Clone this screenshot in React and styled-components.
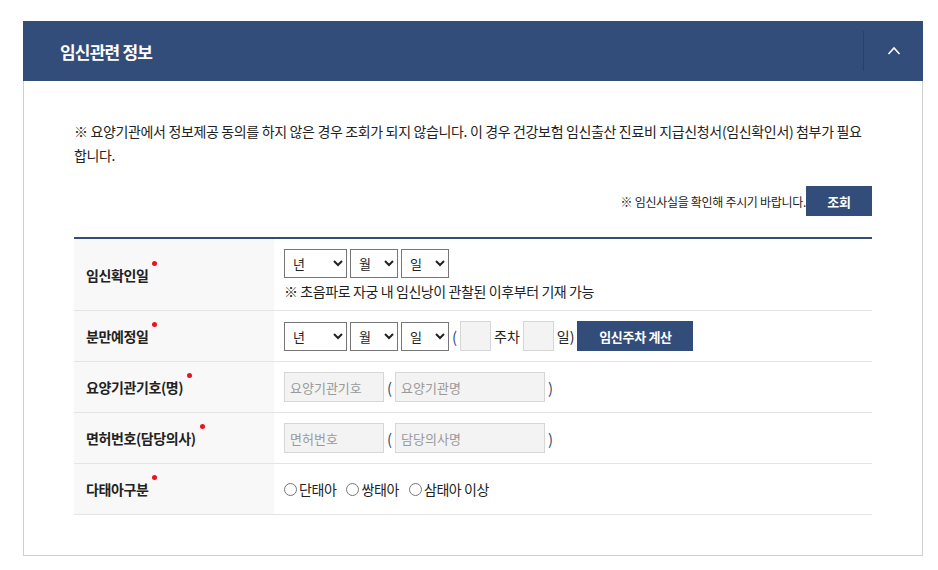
import styled, { createGlobalStyle } from "styled-components";

const Global = createGlobalStyle`
  body {
    margin: 0;
    background: #fff;
    font-family: "Noto Sans CJK KR", "Noto Sans", sans-serif;
    color: #222;
  }
`;

const Page = styled.div`
  padding: 21px 15px 15px 23px;
`;

const Panel = styled.section`
  width: 900px;
  border: 1px solid #cfcfcf;
  border-top: none;
  box-sizing: border-box;
`;

const Header = styled.div`
  height: 60px;
  background: #334d7a;
  display: flex;
  align-items: center;
  margin: 0 -1px;
`;

const Title = styled.h2`
  flex: 1;
  margin: 0;
  padding-left: 37px;
  font-size: 17px;
  font-weight: 700;
  color: #fff;
  letter-spacing: -0.8px;
`;

const Toggle = styled.button`
  width: 60px;
  height: 40px;
  border: none;
  border-left: 1px solid #2a406a;
  background: transparent;
  display: flex;
  align-items: center;
  justify-content: center;
  cursor: pointer;
`;

const Body = styled.div`
  padding: 38px 50px 40px 50px;
`;

const Notice = styled.p`
  margin: 0;
  font-size: 14px;
  line-height: 24px;
  letter-spacing: -0.35px;
  color: #222;
`;

const CheckRow = styled.div`
  display: flex;
  justify-content: flex-end;
  align-items: center;
  margin-top: 19px;
  margin-bottom: 21px;
  font-size: 12px;
  letter-spacing: -0.3px;
`;

const DarkButton = styled.button`
  height: 30px;
  width: ${(p) => p.$w}px;
  border: none;
  background: #334d7a;
  color: #fff;
  font-family: inherit;
  font-size: 13px;
  font-weight: 700;
  letter-spacing: -0.3px;
  cursor: pointer;
`;

const Table = styled.div`
  border-top: 2px solid #334d7a;
`;

const Row = styled.div`
  display: grid;
  grid-template-columns: 200px 1fr;
  min-height: ${(p) => p.$h}px;
  border-bottom: 1px solid #e4e4e4;
`;

const Label = styled.div`
  background: #f8f8f8;
  display: flex;
  align-items: center;
  padding-left: 12px;
  font-size: 14px;
  font-weight: 700;
  letter-spacing: -0.4px;
  color: #222;
`;

const LabelText = styled.span`
  position: relative;
  padding-right: 9px;
`;

const Required = styled.span`
  position: absolute;
  right: 0;
  top: -4px;
  width: 5px;
  height: 5px;
  border-radius: 50%;
  background: #e8141b;
`;

const Cell = styled.div`
  display: flex;
  flex-direction: column;
  justify-content: center;
  padding-left: 10px;
  gap: 3px;
`;

const Line = styled.div`
  display: flex;
  align-items: center;
  gap: 3px;
  font-size: 14px;
  color: #222;
`;

const Select = styled.select`
  width: ${(p) => p.$w}px;
  height: 29px;
  border: 1px solid #767676;
  border-radius: 0;
  background: #fff;
  font-family: inherit;
  font-size: 13px;
  padding-left: 4px;
  color: #222;
`;

const Hint = styled.div`
  font-size: 14px;
  letter-spacing: -0.4px;
  color: #222;
`;

const Field = styled.input`
  width: ${(p) => p.$w}px;
  height: 30px;
  box-sizing: border-box;
  border: 1px solid #d6d6d6;
  background: #f3f3f3;
  font-family: inherit;
  font-size: 13px;
  padding: 0 5px;
  &::placeholder {
    color: #9a9a9a;
  }
`;

const Paren = styled.span`
  color: #334d7a;
  font-size: 15px;
`;

const Unit = styled.span`
  margin: 0 ${(p) => p.$m || 0}px;
`;

const Radio = styled.label`
  display: inline-flex;
  align-items: center;
  margin-right: 7px;
  font-size: 14px;
  letter-spacing: -0.4px;
  input {
    margin: 0 2px 0 0;
    width: 13px;
    height: 13px;
  }
`;

function Chevron() {
  return (
    <svg width="14" height="14" viewBox="0 0 14 14">
      <path d="M1.5 10 L7 4 L12.5 10" fill="none" stroke="#fff" strokeWidth="1.6" />
    </svg>
  );
}

function DateSelects() {
  return (
    <>
      <Select $w={63}><option>년</option></Select>
      <Select $w={48}><option>월</option></Select>
      <Select $w={48}><option>일</option></Select>
    </>
  );
}

function RowLabel({ children }) {
  return (
    <Label>
      <LabelText>
        {children}
        <Required />
      </LabelText>
    </Label>
  );
}

export default function App() {
  return (
    <Page>
      <Global />
      <Panel>
        <Header>
          <Title>임신관련 정보</Title>
          <Toggle aria-label="접기"><Chevron /></Toggle>
        </Header>
        <Body>
          <Notice>
            ※ 요양기관에서 정보제공 동의를 하지 않은 경우 조회가 되지 않습니다. 이 경우 건강보험 임신출산 진료비 지급신청서(임신확인서) 첨부가 필요
            <br />
            합니다.
          </Notice>
          <CheckRow>
            ※ 임신사실을 확인해 주시기 바랍니다.
            <DarkButton $w={66}>조회</DarkButton>
          </CheckRow>
          <Table>
            <Row $h={71}>
              <RowLabel>임신확인일</RowLabel>
              <Cell>
                <Line><DateSelects /></Line>
                <Hint>※ 초음파로 자궁 내 임신낭이 관찰된 이후부터 기재 가능</Hint>
              </Cell>
            </Row>
            <Row $h={50}>
              <RowLabel>분만예정일</RowLabel>
              <Cell>
                <Line>
                  <DateSelects />
                  <Paren>(</Paren>
                  <Field $w={31} />
                  <Unit>주차</Unit>
                  <Field $w={31} />
                  <Unit>일)</Unit>
                  <DarkButton $w={116}>임신주차 계산</DarkButton>
                </Line>
              </Cell>
            </Row>
            <Row $h={50}>
              <RowLabel>요양기관기호(명)</RowLabel>
              <Cell>
                <Line>
                  <Field $w={100} placeholder="요양기관기호" />
                  <Paren>(</Paren>
                  <Field $w={150} placeholder="요양기관명" />
                  <Paren>)</Paren>
                </Line>
              </Cell>
            </Row>
            <Row $h={50}>
              <RowLabel>면허번호(담당의사)</RowLabel>
              <Cell>
                <Line>
                  <Field $w={100} placeholder="면허번호" />
                  <Paren>(</Paren>
                  <Field $w={150} placeholder="담당의사명" />
                  <Paren>)</Paren>
                </Line>
              </Cell>
            </Row>
            <Row $h={50}>
              <RowLabel>다태아구분</RowLabel>
              <Cell>
                <Line>
                  <Radio><input type="radio" name="multi" />단태아</Radio>
                  <Radio><input type="radio" name="multi" />쌍태아</Radio>
                  <Radio><input type="radio" name="multi" />삼태아 이상</Radio>
                </Line>
              </Cell>
            </Row>
          </Table>
        </Body>
      </Panel>
    </Page>
  );
}
